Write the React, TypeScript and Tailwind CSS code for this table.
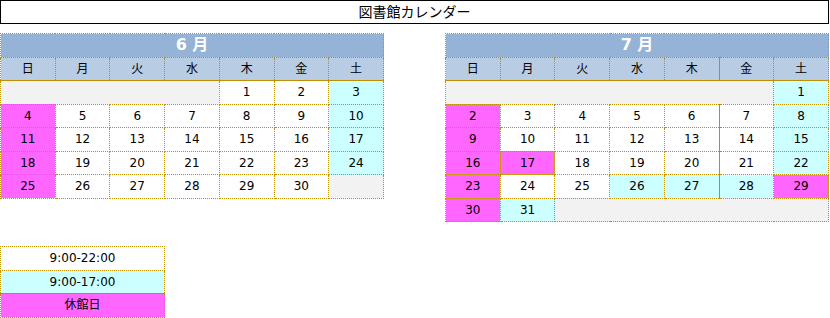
import React from "react";

type Cell = { t?: string; c: "w" | "p" | "c" | "g"; span?: number; solidL?: boolean };

const bg: Record<string, string> = {
  w: "bg-white",
  p: "bg-[#ff66ff]",
  c: "bg-[#ccffff]",
  g: "bg-[#f2f2f2]",
};

const W = (n: number): Cell => ({ t: String(n), c: "w" });
const P = (n: number): Cell => ({ t: String(n), c: "p" });
const C = (n: number): Cell => ({ t: String(n), c: "c" });

const june: Cell[][] = [
  [{ c: "g", span: 4 }, W(1), W(2), C(3)],
  [P(4), W(5), W(6), W(7), W(8), W(9), C(10)],
  [P(11), W(12), W(13), W(14), W(15), W(16), C(17)],
  [P(18), W(19), W(20), W(21), W(22), W(23), C(24)],
  [P(25), W(26), W(27), W(28), W(29), W(30), { c: "g" }],
];

const july: Cell[][] = [
  [{ c: "g", span: 6 }, C(1)],
  [P(2), W(3), W(4), W(5), W(6), W(7), C(8)],
  [P(9), W(10), W(11), W(12), W(13), W(14), C(15)],
  [P(16), P(17), W(18), W(19), W(20), W(21), C(22)],
  [P(23), W(24), W(25), C(26), C(27), C(28), P(29)],
  [P(30), C(31), { c: "g", span: 5 }],
];

const days = ["日", "月", "火", "水", "木", "金", "土"];

function Month({ title, rows, solidKin }: { title: string; rows: Cell[][]; solidKin?: boolean }) {
  return (
    <table className="w-[384px] table-fixed border-collapse text-[12px] text-black">
      <colgroup>
        {days.map((d) => (
          <col key={d} />
        ))}
      </colgroup>
      <tbody>
        <tr className="h-[23.5px]">
          <td
            colSpan={7}
            className="border border-dotted border-[#bf8f00] bg-[#95b3d7] text-center text-[16px] font-bold text-white p-0 leading-none"
          >
            {title}
          </td>
        </tr>
        <tr className="h-[23.5px]">
          {days.map((d, i) => (
            <td
              key={d}
              className={
                "border border-dotted border-[#bf8f00] border-b-solid bg-[#b8cce4] text-center p-0 leading-none " +
                (solidKin && i === 5 ? "border-l-solid" : "")
              }
              style={{
                borderBottomStyle: "solid",
                borderLeftStyle: solidKin && i === 5 ? "solid" : undefined,
              }}
            >
              {d}
            </td>
          ))}
        </tr>
        {rows.map((r, ri) => {
          let col = 0;
          return (
            <tr key={ri} className="h-[23.5px]">
              {r.map((cell, ci) => {
                const start = col;
                col += cell.span ?? 1;
                const solid = solidKin && start === 5 && ri > 0;
                return (
                  <td
                    key={ci}
                    colSpan={cell.span}
                    className={
                      "border border-dotted border-[#bf8f00] text-center p-0 leading-none " + bg[cell.c]
                    }
                    style={solid ? { borderLeftStyle: "solid" } : undefined}
                  >
                    {cell.t ?? ""}
                  </td>
                );
              })}
            </tr>
          );
        })}
      </tbody>
    </table>
  );
}

export default function App() {
  return (
    <div className="w-[830px] h-[318px] bg-white font-['DejaVu_Sans','Noto_Sans_CJK_JP',sans-serif] text-black">
      <div className="w-[829px] h-[24px] border border-black flex items-center justify-center text-[14px] leading-none">
        図書館カレンダー
      </div>
      <div className="mt-[9px] flex items-start">
        <Month title="6 月" rows={june} />
        <div className="ml-[61px]">
          <Month title="7 月" rows={july} solidKin />
        </div>
      </div>
      <table className="mt-[24px] w-[165px] table-fixed border-collapse text-[12px]">
        <tbody>
          <tr className="h-[23.5px]">
            <td className="border border-dotted border-[#bf8f00] bg-white text-center p-0 leading-none">9:00-22:00</td>
          </tr>
          <tr className="h-[23.5px]">
            <td
              className="border border-dotted border-[#bf8f00] bg-[#ccffff] text-center p-0 leading-none"
              style={{ borderBottomStyle: "solid" }}
            >
              9:00-17:00
            </td>
          </tr>
          <tr className="h-[23.5px]">
            <td className="border border-dotted border-[#bf8f00] bg-[#ff66ff] text-center p-0 leading-none">休館日</td>
          </tr>
        </tbody>
      </table>
    </div>
  );
}
